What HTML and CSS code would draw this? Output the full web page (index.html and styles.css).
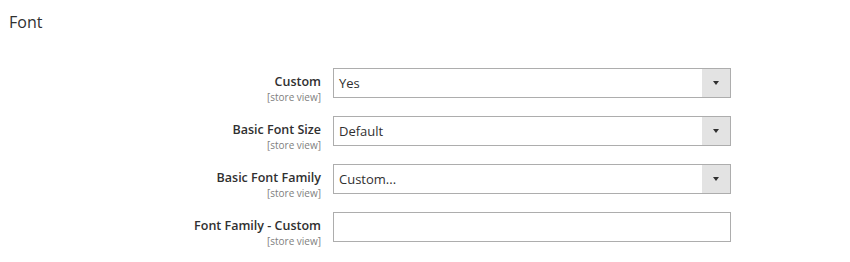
FILE: index.html
```html
<!DOCTYPE html>
<html>
<head>
<meta charset="utf-8">
<link rel="stylesheet" href="styles.css">
</head>
<body>
<div class="page">
  <h2 class="section-title">Font</h2>
  <div class="fieldset">
    <div class="row">
      <div class="label"><span class="name">Custom</span><span class="scope">[store view]</span></div>
      <div class="control select"><span class="value">Yes</span><span class="arrow"></span></div>
    </div>
    <div class="row">
      <div class="label"><span class="name">Basic Font Size</span><span class="scope">[store view]</span></div>
      <div class="control select"><span class="value">Default</span><span class="arrow"></span></div>
    </div>
    <div class="row">
      <div class="label"><span class="name">Basic Font Family</span><span class="scope">[store view]</span></div>
      <div class="control select"><span class="value">Custom...</span><span class="arrow"></span></div>
    </div>
    <div class="row">
      <div class="label"><span class="name">Font Family - Custom</span><span class="scope">[store view]</span></div>
      <div class="control input"></div>
    </div>
  </div>
</div>
</body>
</html>
```
FILE: styles.css
```css
html, body {
  margin: 0;
  padding: 0;
  background: #fff;
}
body {
  font-family: "Open Sans", "Liberation Sans", sans-serif;
  color: #303030;
  min-height: 262px;
}
.page {
  padding: 11px 9px 14px 9px;
}
.section-title {
  margin: 0;
  font-size: 16px;
  font-weight: 400;
  line-height: 22px;
  color: #303030;
}
.fieldset {
  display: flex;
  flex-direction: column;
  gap: 13px;
  margin-top: 35px;
}
.row {
  display: grid;
  grid-template-columns: 312px 398px;
  column-gap: 12px;
  align-items: start;
}
.label {
  display: flex;
  flex-direction: column;
  align-items: flex-end;
  padding-top: 5px;
}
.name {
  font-size: 12.5px;
  font-weight: 600;
  line-height: 18px;
  color: #303030;
}
.scope {
  font-size: 10px;
  line-height: 12px;
  color: #808080;
}
.control {
  box-sizing: border-box;
  height: 30px;
  border: 1px solid #adadad;
  background: #fff;
  display: flex;
  align-items: stretch;
}
.value {
  flex: 1;
  padding-left: 5px;
  font-size: 13px;
  line-height: 28px;
  color: #303030;
}
.arrow {
  width: 28px;
  background: #e3e3e3;
  position: relative;
}
.arrow::after {
  content: "";
  position: absolute;
  left: 50%;
  top: 50%;
  margin-left: -3px;
  margin-top: -2px;
  border-left: 3.5px solid transparent;
  border-right: 3.5px solid transparent;
  border-top: 4px solid #303030;
}
```
